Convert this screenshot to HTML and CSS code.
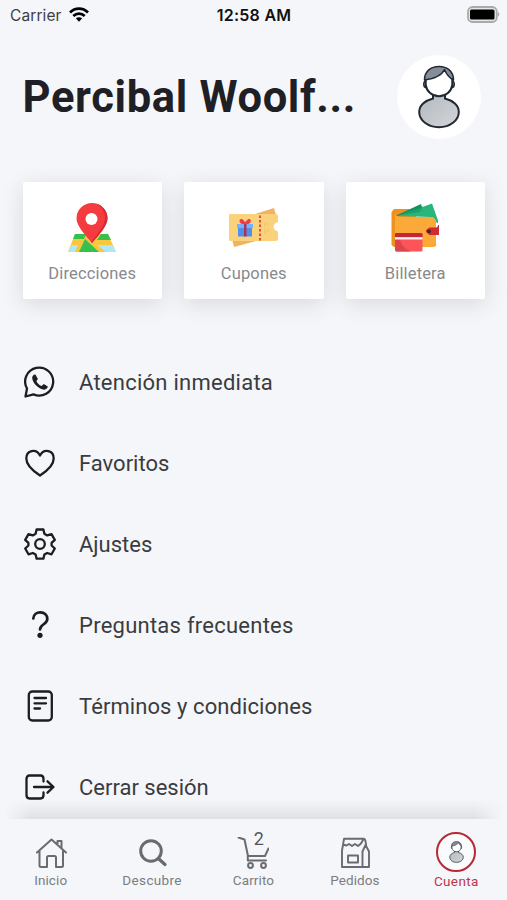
FILE: index.html
```html
<!DOCTYPE html>
<html lang="es">
<head>
<meta charset="utf-8">
<meta name="viewport" content="width=device-width, initial-scale=1">
<title>Cuenta</title>
<link rel="stylesheet" href="styles.css">
</head>
<body>
<svg class="defs" aria-hidden="true">
  <defs>
    <linearGradient id="body-fill" x1="0" y1="0" x2="1" y2="1"><stop offset="0" stop-color="#b3b9c0"/><stop offset="1" stop-color="#d3d5d8"/></linearGradient>
    <symbol id="person" viewBox="0 0 42 64">
      <path d="M15 29v4.500C7 35.500 1.200 40.500 1.200 47c0 8.500 8.800 15.200 19.800 15.200s19.800-6.700 19.800-15.200c0-6.500-5.800-11.500-13.800-13.500V29z" fill="url(#body-fill)" stroke="#202832" stroke-width="2"/>
      <path d="M8 16c-3-.5-3 6.500 0 6.500M34 16c3-.5 3 6.500 0 6.500" fill="#b3b9c0" stroke="#202832" stroke-width="1.500"/>
      <path d="M8 12v8c1 6.500 6 11.300 13 11.300S33 26.500 34 20v-8L26 4z" fill="#fff"/>
      <path d="M7.700 13v7c1 6.500 6.300 11.300 13.300 11.300S33.300 26.500 34.300 20v-7" fill="none" stroke="#202832" stroke-width="2"/>
      <path d="M6.500 15C6.500 6 13 1.500 21 1.500S35.500 6 35.500 15C31.500 13 28.500 9.500 26.500 4.500 24 10 18 13.500 6.500 15z" fill="#858d98" stroke="#202832" stroke-width="1.500" stroke-linejoin="round"/>
    </symbol>
  </defs>
</svg>
<div class="screen">
  <div class="status">
    <div class="carrier">Carrier
      <svg width="20" height="15" viewBox="0 0 20 15"><g fill="none" stroke="#000" stroke-width="2.700"><path d="M1 5.500c5-5.200 13-5.200 18 0"/><path d="M4.300 9c3.300-3.200 8.100-3.200 11.400 0"/></g><path d="M6.800 11.300c2-1.500 4.400-1.500 6.400 0L10 14.700z"/></svg>
    </div>
    <div class="clock">12:58 AM</div>
    <svg class="battery" width="33" height="17" viewBox="0 0 33 17"><rect x="1" y="1" width="28.800" height="15" rx="4.500" fill="#e6e7e9" stroke="#a9aaac" stroke-width="1.800"/><rect x="3" y="3.500" width="24.500" height="10" rx="1.500"/><path d="M31 6v4.500c1.800-.7 1.800-3.800 0-4.500z" fill="#a9aaac"/></svg>
  </div>

  <header class="profile">
    <h1>Percibal Woolf...</h1>
    <div class="avatar"><svg width="42" height="64"><use href="#person"/></svg></div>
  </header>

  <section class="cards">
    <a class="card">
      <svg width="50" height="50" viewBox="0 0 50 50">
        <path d="M8 31h33l8 18H1z" fill="#f9c640"/>
        <path d="M8 31h11l-2 5H6zM34 31h7l3 6H30zM18 36l14 13H12z" fill="#35c14c"/>
        <path d="M4.500 42H11l-3 7H1zM30 42h15.500l3.500 7H39z" fill="#aee7f5"/>
        <path d="M25 40C18 31.500 9.500 23 9.500 15.500a15.500 15.500 0 0 1 31 0C40.500 23 32 31.500 25 40z" fill="#f53b40"/>
        <path d="M29 .5a15.500 15.500 0 0 1 11.500 15C40.500 23 32 31.500 25 40l-1-1C32 29 38 22 38 14c0-6-4-11-9-13.500z" fill="#d32c3a"/>
        <circle cx="24.500" cy="16" r="6" fill="#fff"/>
      </svg>
      <span>Direcciones</span>
    </a>
    <a class="card">
      <svg width="50" height="50" viewBox="0 0 50 50">
        <path d="M3 36l2 8 22-6zM26 11L45 5l2 7z" fill="#f1b35e"/>
        <path d="M1 11h46q2 0 2 2v6c-6 1.500-6 8 0 9.500v7.500q0 2-2 2H1q-1 0-1-1V12q0-1 1-1z" fill="#fad27b"/>
        <path d="M36 19v4M39 20v2M36 26v5M39 26v3" fill="none" stroke="#edc065"/>
        <path d="M31 12.500v26" stroke="#dc5148" stroke-width="2" stroke-dasharray="2.500 2"/>
        <path d="M9 21h14v12.500H9z" fill="#5190e9"/><path d="M8 21h16v4H8z" fill="#74b2ff"/>
        <path d="M15 21h2.500v12.500H15z" fill="#a8345b"/>
        <path d="M16.200 21c-7 1-7-6-3-5l3 3 3-3c4-1 4 6-3 5z" fill="#ef3c4a"/>
      </svg>
      <span>Cupones</span>
    </a>
    <a class="card">
      <svg width="50" height="50" viewBox="0 0 50 50">
        <path d="M4 6h22v38H4L1.500 42V9z" fill="#ef921d"/>
        <path d="M5 13L31 1l3 11z" fill="#159261"/><path d="M8 13L42 .500l6 17v3l-8-6.500z" fill="#29b67a"/>
        <path d="M12 12L33 3l-3 6z" fill="#159261" opacity=".6"/>
        <path d="M5 11c2 3 5 3 8 3h30l3 3v26l-2 1H5z" fill="#fba938"/>
        <path d="M39.500 24.500H46q2 0 2-2.500h1v10H39.500L36 29v-2z" fill="#cf2b31"/><circle cx="39" cy="28.300" r="1.900" fill="#43232d"/>
        <rect x="5" y="30" width="27.500" height="18.500" rx="1.500" fill="#fb555a"/>
        <path d="M5 36h5c1 6 5 10 11 12.500H6.500L5 47z" fill="#dc454d"/>
        <path d="M6 30h25.500l1 1v3H5v-3z" fill="#c62735"/><path d="M5 34.200h27.500v2.300H5z" fill="#fff0ee"/>
      </svg>
      <span>Billetera</span>
    </a>
  </section>

  <nav class="menu">
    <a><svg viewBox="0 0 32 32"><path d="M1.500 30.500L3 22.500A14 14 0 1 1 9.500 28.400z"/><path d="M11.400 8.600c-1.300-.7-3.500 1.500-3.200 3.500.5 5 6 10.800 11 11.500 2 .3 4.600-1.200 4.600-3.200l-4-2.300-2.200 2c-2.500-1-4.300-2.900-5.200-5.200l1.500-2z" fill="#1b1d22" stroke="none"/></svg><span class="wide">Atención inmediata</span></a>
    <a><svg viewBox="0 0 32 32"><path d="M16 28.500C9 24 2.300 18 2.300 11.500 2.300 3.500 12 1 16 8.500c4-7.500 13.700-5 13.700 3C29.700 18 23 24 16 28.500z"/></svg><span>Favoritos</span></a>
    <a><svg viewBox="0 0 32 32"><path d="M12.600 1.500h6.800l1 4.300 2.800 1.600 4.300-1.300 3.300 5.800-3.200 3v2.600l3.200 3-3.300 5.800-4.300-1.300-2.800 1.600-1 4.100h-6.800l-1-4.100-2.800-1.600-4.300 1.300-3.300-5.800 3.200-3v-2.600l-3.200-3 3.300-5.800 4.300 1.300 2.800-1.600z"/><circle cx="16" cy="16" r="4.800"/></svg><span>Ajustes</span></a>
    <a><svg viewBox="0 0 32 32"><path d="M9.300 9.500c.5-8.500 14-8 14 .5 0 5.500-7.300 5-7.300 10.500" stroke-width="2.700"/><circle cx="16" cy="26.300" r="2.600" fill="#1b1d22" stroke="none"/></svg><span class="wide">Preguntas frecuentes</span></a>
    <a><svg viewBox="0 0 32 32"><rect x="4.800" y="1.500" width="23" height="29" rx="3.500"/><path d="M10.500 8h11.500M10.500 13.300h11.500M10.500 18.500h5.500"/></svg><span class="slight">Términos y condiciones</span></a>
    <a><svg viewBox="0 0 32 32"><path d="M19.500 10.500V8q0-3.500-3-3.500H5.500q-3 0-3 3.500v16q0 3.500 3 3.500h11q3 0 3-3.500v-2.500M10 16h19M23.500 10.300l6 5.700-6 5.700"/></svg><span>Cerrar sesión</span></a>
  </nav>

  <footer class="tabs">
    <a><svg viewBox="0 0 32 32"><path d="M2 15.500L16.500 2.500 31 15.500M4.500 14v14.500q0 1.500 1.500 1.500h6V20.500q0-1.500 1.500-1.500h6q1.500 0 1.500 1.500V30h5.500q1.500 0 1.500-1.500V14M22.500 7V4h4v7"/></svg><span>Inicio</span></a>
    <a><svg viewBox="0 0 32 32"><circle cx="15" cy="14" r="10.300" stroke-width="3"/><path d="M22.300 21.500l6.700 6" stroke-width="3.300"/></svg><span class="wide">Descubre</span></a>
    <a><svg viewBox="0 0 32 32"><path d="M1.500.5l6 2L11 19h17l3.500-7.500M10.800 19v4.500H29"/><circle cx="13.500" cy="28.500" r="2.400"/><circle cx="26.500" cy="28.500" r="2.400"/></svg><b class="count">2</b><span>Carrito</span></a>
    <a><svg viewBox="0 0 32 32"><path d="M5 1.800h19.500q1.500 0 2 2.500l.7 4M5 1.800L4 8l-1 5.500V30h27V14.500L26.500 8 23.500 14.500V30M4 7.500l3.500 1 2.500-1.500 3 2 3-2 3 2 3-2.500L24.500 2M9 18.500h10v7H9z" stroke-width="1.900"/></svg><span>Pedidos</span></a>
    <a class="active"><i class="mini"><svg width="15" height="22"><use href="#person"/></svg></i><span class="wide">Cuenta</span></a>
  </footer>
</div>
</body>
</html>
```
FILE: styles.css
```css
* { box-sizing: border-box; }
body {
  margin: 0;
  background: #f4f6fa;
  font-family: Roboto, "Liberation Sans", sans-serif;
  color: #3a3c40;
}
.defs { position: absolute; width: 0; height: 0; }
.screen {
  width: 507px;
  height: 900px;
  display: flex;
  flex-direction: column;
  overflow: hidden;
}
.status {
  height: 30px;
  flex: none;
  display: grid;
  grid-template-columns: 1fr auto 1fr;
  align-items: center;
  padding: 0 7px 0 10px;
  font-family: Inter, Roboto, sans-serif;
  font-size: 15.5px;
}
.carrier { display: flex; align-items: center; gap: 7px; color: #3d3e42; letter-spacing: .1px; }
.carrier svg { margin-bottom: 2px; }
.clock { font-weight: 600; color: #111; font-size: 16px; letter-spacing: .25px; margin-right: 2px; }
.battery { justify-self: end; margin-bottom: 2px; }
.profile {
  height: 84px;
  margin-top: 25px;
  padding: 0 26px 0 22.500px;
  flex: none;
  display: flex;
  align-items: center;
  justify-content: space-between;
}
h1 {
  margin: 2px 0 0;
  font-size: 43.5px;
  line-height: 50px;
  font-weight: 700;
  letter-spacing: .65px;
  color: #1e2025;
  white-space: nowrap;
}
.avatar {
  width: 84px;
  height: 84px;
  border-radius: 50%;
  background: #fff;
  display: flex;
  align-items: center;
  justify-content: center;
}
.cards {
  flex: none;
  display: grid;
  grid-template-columns: repeat(3, 139.500px);
  justify-content: space-between;
  margin-top: 43px;
  padding: 0 22px 0 22.500px;
}
.card {
  height: 117px;
  background: #fff;
  border-radius: 2px;
  box-shadow: 0 5px 22px rgba(50, 50, 50, .14);
  display: flex;
  flex-direction: column;
  align-items: center;
  padding-top: 21px;
  font-size: 16.5px;
  line-height: 20px;
  letter-spacing: .15px;
  color: #88898c;
}
.card span { margin-top: 11px; white-space: nowrap; }
.menu {
  flex: none;
  height: 477px;
  margin-top: 42px;
  padding-left: 24px;
}
.menu a { height: 81px; display: flex; align-items: center; }
.menu svg {
  width: 32px;
  height: 32px;
  fill: none;
  stroke: #1b1d22;
  stroke-width: 2.300;
  stroke-linejoin: round;
  stroke-linecap: round;
}
.menu span { margin-left: 23px; font-size: 22px; line-height: 28px; white-space: nowrap; padding-top: 3px; }
.menu .wide { letter-spacing: .25px; }
.menu .slight { letter-spacing: .08px; }
.tabs {
  flex: none;
  height: 81px;
  margin-top: 1px;
  position: relative;
  background: #f4f6fa;
  display: grid;
  grid-template-columns: repeat(5, 1fr);
}
/* soft shadow that fades out before the left and right edges */
.tabs::before {
  content: "";
  position: absolute;
  left: 0;
  right: 0;
  bottom: 100%;
  height: 20px;
  background: linear-gradient(to top, rgba(40, 40, 40, .1), rgba(40, 40, 40, 0));
  mask-image: linear-gradient(to right, transparent 4px, #000 32px, #000 calc(100% - 32px), transparent calc(100% - 4px));
}
.tabs a {
  position: relative;
  display: flex;
  flex-direction: column;
  align-items: center;
  padding-top: 18px;
  font-size: 13.5px;
  line-height: 16px;
  letter-spacing: .1px;
  color: #7c7d81;
}
.tabs a > svg { width: 32px; height: 32px; fill: none; stroke: #6a6b6e; stroke-width: 2; stroke-linejoin: round; stroke-linecap: round; }
.tabs span { margin-top: 3px; }
.tabs .wide { letter-spacing: .35px; }
.count { position: absolute; left: 51px; top: 10px; font-size: 18px; line-height: 20px; font-weight: 400; color: #55565a; }
.tabs .active { padding-top: 13px; color: #bf354b; }
.tabs .active span { margin-top: 1px; }
.mini {
  width: 40px;
  height: 40px;
  border: 2px solid #b82835;
  border-radius: 50%;
  background: #fafbfd;
  display: flex;
  align-items: center;
  justify-content: center;
}
```
